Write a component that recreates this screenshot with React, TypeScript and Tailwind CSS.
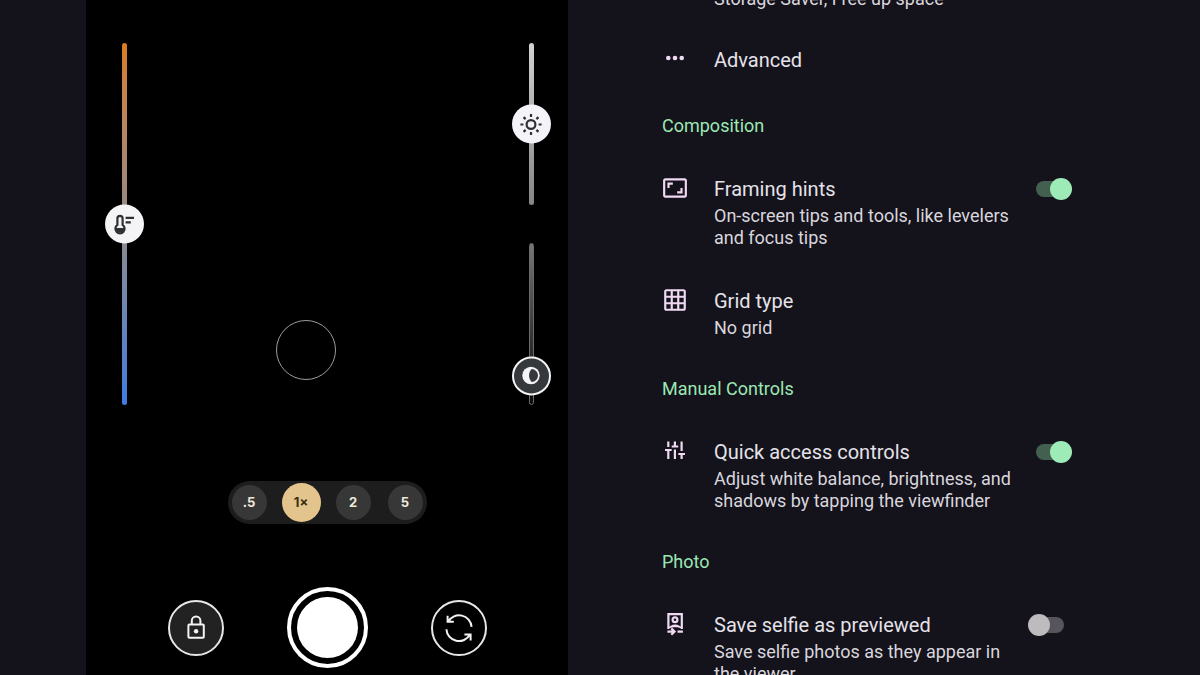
import { useState } from "react";
import type { ReactNode } from "react";
import { MdOutlineAspectRatio, MdOutlineGridOn } from "react-icons/md";

function ThermometerIcon() {
  return (
    <svg viewBox="0 0 26 26" className="size-[26px]" fill="none" stroke="currentColor" strokeWidth="2.2">
      <path d="M6.4 13.4V7a2.6 2.6 0 0 1 5.2 0v6.4a4.6 4.6 0 1 1-5.2 0z" />
      <path d="M4.4 16.4h9.2a4.6 4.6 0 0 1-9.2 0z" fill="currentColor" stroke="none" />
      <path d="M14.6 6.4H23M14.6 10.8h5.2" />
    </svg>
  );
}

function SunIcon() {
  return (
    <svg viewBox="0 0 26 26" className="size-[26px]" fill="none" stroke="currentColor" strokeWidth="2.2">
      <circle cx="13" cy="13" r="4.4" />
      <path d="M13 2.4v3M13 20.6v3M2.4 13h3M20.6 13h3M5.6 5.6l2 2M18.4 18.4l2 2M5.6 20.4l2-2M18.4 7.6l2-2" />
    </svg>
  );
}

function ShadowIcon() {
  return (
    <svg viewBox="0 0 26 26" className="size-[26px] shrink-0">
      <circle cx="13" cy="13" r="8.7" fill="#f4f4f6" />
      <path d="M13.6 6.6a6.4 6.4 0 0 1 0 12.8c-3.400-3.600-3.400-9.200 0-12.800z" fill="#35393b" />
    </svg>
  );
}

function LockIcon() {
  return (
    <svg viewBox="0 0 26 26" className="size-[26px]" fill="none" stroke="currentColor" strokeWidth="2">
      <rect x="5.4" y="9.4" width="15.4" height="13.4" rx="1" />
      <path d="M8.8 9.400V5.800a4.300 4.300 0 0 1 8.600 0v3.600" />
      <circle cx="13.1" cy="16.2" r="2.2" fill="currentColor" stroke="none" />
    </svg>
  );
}

function SwitchCameraIcon() {
  return (
    <svg viewBox="0 0 30 30" className="size-[30px]" fill="none" stroke="currentColor" strokeWidth="2">
      <path d="M3.6 2.8v6h6.2M4.2 8.5A12.600 12.600 0 0 1 27.600 13.900" />
      <path d="M26.600 27.400v-6h-6.200M2.400 16.200A12.600 12.600 0 0 0 26 21.600" />
    </svg>
  );
}

function DotsIcon() {
  return (
    <svg viewBox="0 0 26 26" className="size-[26px]" fill="currentColor">
      <circle cx="6.3" cy="12" r="2.3" />
      <circle cx="13" cy="12" r="2.3" />
      <circle cx="19.7" cy="12" r="2.3" />
    </svg>
  );
}

function SlidersIcon() {
  return (
    <svg viewBox="0 0 26 26" className="size-[26px]" fill="none" stroke="currentColor" strokeWidth="2.2">
      <path d="M6.3 3.500V9M3 12h6.700M6.300 12v9" />
      <path d="M12.900 3.500v5M9.700 8.500h6.500M12.900 11.500V21" />
      <path d="M19.600 3.500V13M16.300 16H23M19.600 16v5" />
    </svg>
  );
}

function SelfieIcon() {
  return (
    <svg viewBox="0 0 26 26" className="size-[26px]" fill="none" stroke="currentColor" strokeWidth="2.2">
      <path d="M6.400 18V3.100h13.400V18" />
      <circle cx="13" cy="8.800" r="2.400" />
      <path d="M5.400 18c3.400-6 12-6 15.400 0-4.400-2.200-11-2.200-15.400 0z" fill="currentColor" stroke="none" />
      <path d="M5.400 20.600h6.500M9.300 17.400l3.200 3.200-3.200 3.200M15.500 20.600h5.400" />
    </svg>
  );
}

type SliderProps = {
  label: string;
  start: number;
  track: string;
  thumb: string;
  children: ReactNode;
};

function Slider({ label, start, track, thumb, children }: SliderProps) {
  const [value, setValue] = useState(start);

  return (
    <div className="relative flex w-10 justify-center">
      <input
        type="range"
        aria-label={label}
        value={value}
        onChange={(e) => setValue(Number(e.target.value))}
        className={`w-[5px] cursor-pointer appearance-none rounded-full [direction:rtl] [writing-mode:vertical-lr] [&::-webkit-slider-thumb]:opacity-0 ${track}`}
      />
      <span
        className={`pointer-events-none absolute flex size-[39px] -translate-y-1/2 items-center justify-center rounded-full ${thumb}`}
        style={{ top: `${100 - value}%` }}
      >
        {children}
      </span>
    </div>
  );
}

const zooms = [".5", "1×", "2", "5"];

function ZoomBar() {
  const [active, setActive] = useState("1×");

  return (
    <div className="flex h-[43px] items-center gap-[13px] rounded-full bg-[#1d1d1d] px-0.5">
      {zooms.map((z) => (
        <div key={z} className="flex w-[39px] justify-center">
          <button
            onClick={() => setActive(z)}
            className={`flex items-center justify-center rounded-full font-[Inter,sans-serif] text-[13px] font-bold ${
              z === active ? "size-[39px] bg-[#e3c48d] text-[#3d2e10]" : "size-[35px] bg-[#373737] text-[#efe9dc]"
            }`}
          >
            {z}
          </button>
        </div>
      ))}
    </div>
  );
}

function Viewfinder() {
  return (
    <section className="flex flex-col items-center overflow-hidden bg-black">
      <div className="relative flex w-full justify-between pt-[43px] pr-[17px] pl-[18px]">
        <Slider
          label="White balance"
          start={50}
          track="h-[362px] bg-linear-to-b from-[#d97c20] via-[#8f8a88] to-[#3f7be0]"
          thumb="bg-[#f4f4f6] text-[#2f3033]"
        >
          <ThermometerIcon />
        </Slider>
        <div className="absolute top-80 left-[190px] size-[60px] rounded-full border border-[#9c9c9c]" />
        <div className="flex flex-col gap-[38px]">
          <Slider
            label="Brightness"
            start={50}
            track="h-[162px] bg-linear-to-b from-[#d2d2d4] to-[#858587]"
            thumb="bg-[#f4f4f8] text-[#2f3033]"
          >
            <SunIcon />
          </Slider>
          <Slider
            label="Shadows"
            start={18}
            track="h-[162px] border border-[#6a6a6a] bg-linear-to-b from-[#777] to-[#0c0c0c]"
            thumb="border-2 border-[#f4f4f6] bg-[#35393b]"
          >
            <ShadowIcon />
          </Slider>
        </div>
      </div>

      <div className="mt-[76px]">
        <ZoomBar />
      </div>

      <div className="mt-[63px] flex items-center gap-[63px]">
        <button
          aria-label="Lock"
          className="flex size-14 items-center justify-center rounded-full border-2 border-[#e6e6e6] bg-[#222] text-[#f2f2f2]"
        >
          <LockIcon />
        </button>
        <button
          aria-label="Take photo"
          className="flex size-[81px] items-center justify-center rounded-full border-4 border-white"
        >
          <span className="size-[61px] rounded-full bg-white" />
        </button>
        <button
          aria-label="Switch camera"
          className="flex size-14 items-center justify-center rounded-full border-2 border-[#e6e6e6] text-[#f2f2f2]"
        >
          <SwitchCameraIcon />
        </button>
      </div>
    </section>
  );
}

function Toggle({ id, on }: { id: string; on: boolean }) {
  return (
    <span className="relative flex h-8 w-11 shrink-0 items-center">
      <input
        id={id}
        type="checkbox"
        role="switch"
        defaultChecked={on}
        className="peer absolute inset-0 cursor-pointer appearance-none"
      />
      <span className="pointer-events-none mx-auto h-4 w-7 rounded-full bg-[#57555b] peer-checked:bg-[#435f50]" />
      <span className="pointer-events-none absolute left-0 size-[22px] rounded-full bg-[#bdbbbd] peer-checked:left-[22px] peer-checked:bg-[#9debb7]" />
    </span>
  );
}

type RowProps = {
  title: string;
  text?: string;
  icon?: ReactNode;
  toggle?: { id: string; on: boolean };
};

function Row({ title, text, icon, toggle }: RowProps) {
  return (
    <div className="mb-9 flex items-start">
      <div className="flex h-[30px] w-[52px] shrink-0 items-center text-[#efd9f3]">{icon}</div>
      <div className="flex-1">
        {toggle ? (
          <label htmlFor={toggle.id} className="block text-xl leading-8">
            {title}
          </label>
        ) : (
          <h3 className="text-xl leading-8">{title}</h3>
        )}
        {text && <p className="max-w-[310px] text-lg leading-[22px] text-[#d9d6de]">{text}</p>}
      </div>
      {toggle && <Toggle {...toggle} />}
    </div>
  );
}

function Heading({ children }: { children: ReactNode }) {
  return <h2 className="mb-[33px] text-lg leading-7 text-[#9be8b4]">{children}</h2>;
}

function Settings() {
  return (
    <section className="-mt-[10px] pr-7 pl-[30px] font-[Roboto,sans-serif] text-[#e5e2ea]">
      <p className="mb-9 ml-[52px] text-lg leading-[18px] text-[#d9d6de]">Storage Saver, Free up space</p>
      <Row title="Advanced" icon={<DotsIcon />} />

      <Heading>Composition</Heading>
      <Row
        title="Framing hints"
        text="On-screen tips and tools, like levelers and focus tips"
        icon={<MdOutlineAspectRatio size={26} />}
        toggle={{ id: "framing", on: true }}
      />
      <Row title="Grid type" text="No grid" icon={<MdOutlineGridOn size={26} />} />

      <Heading>Manual Controls</Heading>
      <Row
        title="Quick access controls"
        text="Adjust white balance, brightness, and shadows by tapping the viewfinder"
        icon={<SlidersIcon />}
        toggle={{ id: "quick", on: true }}
      />

      <Heading>Photo</Heading>
      <Row
        title="Save selfie as previewed"
        text="Save selfie photos as they appear in the viewer"
        icon={<SelfieIcon />}
        toggle={{ id: "selfie", on: false }}
      />
    </section>
  );
}

export default function App() {
  return (
    <main className="grid h-screen grid-cols-[86fr_482fr_64fr_468fr_100fr] overflow-hidden bg-[#14121a]">
      <div />
      <Viewfinder />
      <div />
      <Settings />
    </main>
  );
}
